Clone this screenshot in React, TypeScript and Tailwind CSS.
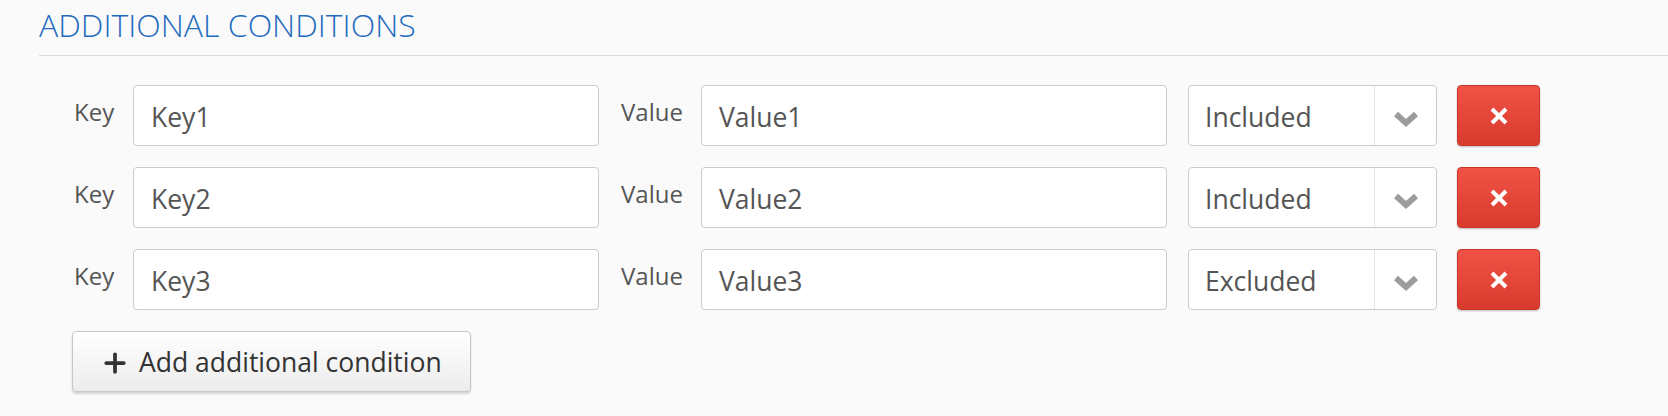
import { Plus } from "lucide-react";

type Condition = {
  key: string;
  value: string;
  mode: "Included" | "Excluded";
};

const conditions: Condition[] = [
  { key: "Key1", value: "Value1", mode: "Included" },
  { key: "Key2", value: "Value2", mode: "Included" },
  { key: "Key3", value: "Value3", mode: "Excluded" },
];

function Chevron() {
  return (
    <svg width="26" height="18" viewBox="0 0 26 18" fill="none">
      <polyline points="3,4 13,13 23,4" stroke="#9c9c9c" strokeWidth="6" strokeLinejoin="miter" />
    </svg>
  );
}

function Cross() {
  return (
    <svg width="20" height="20" viewBox="0 0 20 20" fill="none">
      <path d="M3 3 L17 17 M17 3 L3 17" stroke="white" strokeWidth="4" />
    </svg>
  );
}

function ConditionRow({ item }: { item: Condition }) {
  return (
    <div className="flex h-[61px] items-start">
      <span className="w-[59px] pt-[11px] text-[24px] leading-[32px] text-[#555]">Key</span>
      <div className="flex h-[61px] w-[466px] items-center rounded-[4px] border border-[#ccc] bg-white px-[17px] pt-[4px] text-[26.5px] text-[#555]">
        {item.key}
      </div>
      <span className="ml-[22px] w-[80px] pt-[11px] text-[24px] leading-[32px] text-[#555]">Value</span>
      <div className="flex h-[61px] w-[466px] items-center rounded-[4px] border border-[#ccc] bg-white px-[17px] pt-[4px] text-[26.5px] text-[#555]">
        {item.value}
      </div>
      <div className="ml-[21px] flex h-[61px] w-[249px] items-stretch rounded-[4px] border border-[#ccc] bg-white text-[26.5px] text-[#555]">
        <span className="flex flex-1 items-center px-[16px] pt-[4px]">{item.mode}</span>
        <span className="flex w-[62px] items-center justify-center border-l border-[#e3e3e3] pt-[6px]">
          <Chevron />
        </span>
      </div>
      <button className="ml-[20px] flex h-[61px] w-[83px] items-center justify-center rounded-[4px] border border-[#c9362a] bg-gradient-to-b from-[#f05245] to-[#d93a2e] shadow-[0_1px_2px_rgba(0,0,0,0.25)]">
        <Cross />
      </button>
    </div>
  );
}

export default function App() {
  return (
    <div
      className="h-[416px] w-full overflow-hidden bg-[#fafafa] pl-[39px]"
      style={{ fontFamily: '"Open Sans", "Noto Sans", sans-serif' }}
    >
      <h2 className="pt-[2px] text-[32px] font-light leading-[46px] text-[#1f6bbf]">
        ADDITIONAL CONDITIONS
      </h2>
      <div className="mt-[7px] border-t border-[#dcdcdc]" />
      <div className="mt-[29px] flex flex-col gap-[21px] pl-[35px]">
        {conditions.map((c) => (
          <ConditionRow key={c.key} item={c} />
        ))}
      </div>
      <button className="ml-[33px] mt-[21px] flex h-[61px] w-[399px] items-center gap-[9px] rounded-[4px] border border-[#c6c6c6] bg-gradient-to-b from-white to-[#ececec] pl-[27px] pt-[2px] text-[26.5px] text-[#333] shadow-[0_2px_2px_rgba(0,0,0,0.15)]">
        <Plus size={30} strokeWidth={3} />
        Add additional condition
      </button>
    </div>
  );
}
